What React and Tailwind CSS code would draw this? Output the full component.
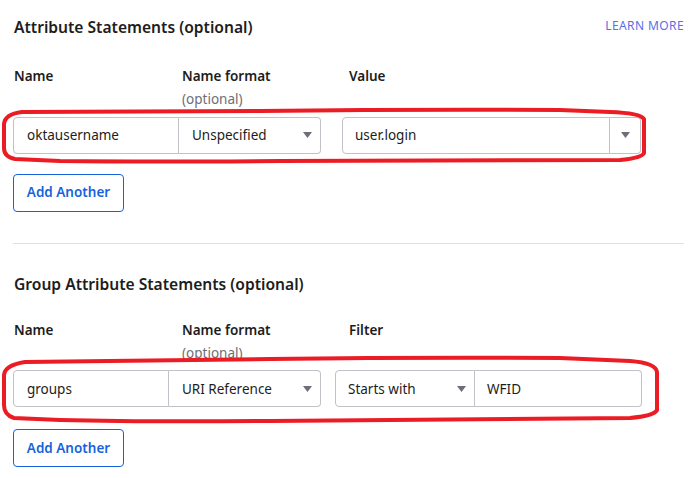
import React from "react";

const Caret = () => (
  <svg width="9" height="6" viewBox="0 0 9 6" className="shrink-0">
    <path d="M0 0h9L4.5 6z" fill="#6e6e78" />
  </svg>
);

const Label = ({ children, w }) => (
  <div className={`${w} text-[13.5px] font-semibold text-[#1d1d21]`}>{children}</div>
);

const AttributeRow = ({ cols }) => (
  <div className="flex items-stretch h-[37px] text-[13.5px] text-[#1d1d21]">{cols}</div>
);

const AddAnother = () => (
  <button className="h-[38px] w-[111px] rounded-[4px] border border-[#1662dd] text-[13.5px] font-semibold text-[#1662dd]">
    Add Another
  </button>
);

const App = () => {
  return (
    <div className="relative w-[696px] h-[478px] bg-white overflow-hidden" style={{ fontFamily: '"Noto Sans", Arial, sans-serif' }}>
      <div className="pl-[13px] pr-[12px]">
        {/* ── Attribute statements ── */}
        <div className="flex items-center justify-between pt-[16px] h-[39px]">
          <h2 className="pl-[1px] text-[15.6px] font-semibold text-[#1d1d21]">Attribute Statements (optional)</h2>
          <a className="text-[12px] tracking-[0.4px] text-[#5b6ee8] -mt-[4px]">LEARN MORE</a>
        </div>

        <div className="flex mt-[27px] pl-[1px]">
          <Label w="w-[168px]">Name</Label>
          <div className="w-[167px]">
            <Label>Name format</Label>
            <div className="mt-[3px] text-[13.5px] text-[#6e6e78]">(optional)</div>
          </div>
          <Label>Value</Label>
        </div>

        <div className="mt-[7px]">
          <AttributeRow
            cols={
              <>
                <div className="w-[166px] flex items-center px-[13px] border border-[#c1c1c8] rounded-l-[4px]">oktausername</div>
                <div className="w-[142px] flex items-center justify-between pl-[13px] pr-[8px] border border-l-0 border-[#c1c1c8] rounded-r-[4px]">
                  Unspecified
                  <Caret />
                </div>
                <div className="ml-[21px] w-[268px] flex items-center px-[12px] border border-[#c1c1c8] rounded-l-[4px]">user.login</div>
                <div className="w-[31px] flex items-center justify-center border border-l-0 border-[#c1c1c8] rounded-r-[4px]">
                  <Caret />
                </div>
              </>
            }
          />
        </div>

        <div className="mt-[20px]">
          <AddAnother />
        </div>

        <div className="mt-[31px] border-t border-[#e0e0e3]" />

        {/* ── Group attribute statements ── */}
        <h2 className="mt-[29px] pl-[1px] text-[15.6px] font-semibold text-[#1d1d21]">Group Attribute Statements (optional)</h2>

        <div className="flex mt-[24px] pl-[1px]">
          <Label w="w-[168px]">Name</Label>
          <div className="w-[167px]">
            <Label>Name format</Label>
            <div className="mt-[3px] text-[13.5px] text-[#6e6e78]">(optional)</div>
          </div>
          <Label>Filter</Label>
        </div>

        <div className="mt-[7px]">
          <AttributeRow
            cols={
              <>
                <div className="w-[156px] flex items-center px-[13px] border border-[#c1c1c8] rounded-l-[4px]">groups</div>
                <div className="w-[152px] flex items-center justify-between pl-[13px] pr-[8px] border border-l-0 border-[#c1c1c8] rounded-r-[4px]">
                  URI Reference
                  <Caret />
                </div>
                <div className="ml-[14px] w-[140px] flex items-center justify-between pl-[12px] pr-[8px] border border-[#c1c1c8] rounded-l-[4px]">
                  Starts with
                  <Caret />
                </div>
                <div className="w-[167px] flex items-center px-[12px] border border-l-0 border-[#c1c1c8] rounded-r-[4px]">WFID</div>
              </>
            }
          />
        </div>

        <div className="mt-[22px]">
          <AddAnother />
        </div>
      </div>

      {/* hand-drawn red highlights */}
      <svg className="absolute inset-0 pointer-events-none" width="696" height="478" viewBox="0 0 696 478">
        <path
          d="M22 112 L260 111 Q420 109 560 110 L610 112 Q640 113 644 119 L644 153 Q642 158 620 160 L280 161 Q150 162 60 161 L15 159 Q4 157 4 148 L4 124 Q5 114 22 112 Z"
          fill="none"
          stroke="#ec1c24"
          strokeWidth="4"
        />
        <path
          d="M25 362 L270 359 Q420 357 560 358 L630 361 Q656 363 657 372 L657 410 Q654 416 630 418 L270 421 Q140 422 60 420 L14 418 Q4 415 4 405 L4 375 Q5 365 25 362 Z"
          fill="none"
          stroke="#ec1c24"
          strokeWidth="4"
        />
      </svg>
    </div>
  );
};

export default App;
